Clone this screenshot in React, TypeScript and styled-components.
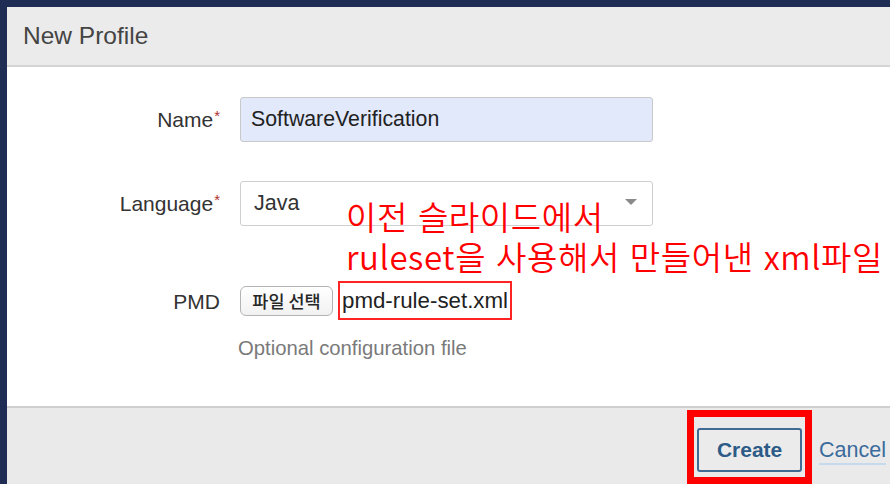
import React from "react";
import styled, { createGlobalStyle } from "styled-components";

const Global = createGlobalStyle`
  *, *::before, *::after { box-sizing: border-box; }
  html, body { margin: 0; padding: 0; }
  body {
    width: 890px;
    height: 484px;
    overflow: hidden;
    background: #1f2d54;
    font-family: "Liberation Sans", Arial, Helvetica, sans-serif;
  }
`;

const Dialog = styled.div`
  margin: 7px 0 0 7px;
  width: 883px;
  height: 477px;
  background: #fff;
  display: flex;
  flex-direction: column;
`;

const Header = styled.header`
  flex: none;
  height: 60px;
  padding-left: 16px;
  display: flex;
  align-items: center;
  background: #ebebeb;
  border-bottom: 2px solid #d5d5d5;
  color: #444;
  font-size: 24.5px;
`;

const Body = styled.section`
  position: relative;
  flex: none;
  height: 339px;
  padding-top: 30px;
`;

const Field = styled.div<{ $gap: number; $h: number }>`
  display: grid;
  grid-template-columns: 215px 413px;
  column-gap: 18px;
  align-items: center;
  margin-top: ${(p) => p.$gap}px;
  height: ${(p) => p.$h}px;
`;

const Label = styled.label<{ $shift?: number }>`
  text-align: right;
  padding-right: 2px;
  color: #333;
  font-size: 21px;
  line-height: 24px;
  margin-top: ${(p) => p.$shift ?? -3}px;
`;

const Required = styled.span`
  color: #b3302c;
  font-size: 15px;
  vertical-align: 6px;
  margin-left: 1px;
`;

const TextInput = styled.input`
  width: 100%;
  height: 45px;
  padding: 0 10px;
  border: 1px solid #c9c9c9;
  border-radius: 3px;
  background: #e1e9fb;
  color: #222;
  font-family: "Liberation Sans", Arial, sans-serif;
  font-size: 21.3px;
  outline: none;
`;

const Select = styled.div`
  height: 45px;
  padding: 0 15px 0 13px;
  display: flex;
  align-items: center;
  justify-content: space-between;
  border: 1px solid #cfcfcf;
  border-radius: 3px;
  background: #fff;
  color: #333;
  font-size: 21.5px;
`;

const Caret = styled.span`
  width: 0;
  height: 0;
  margin-top: -4px;
  border-left: 6px solid transparent;
  border-right: 6px solid transparent;
  border-top: 6px solid #8a8a8a;
`;

const FilePicker = styled.div`
  display: flex;
  align-items: center;
  gap: 5px;
`;

const FileButton = styled.button`
  width: 93px;
  height: 30px;
  padding: 0;
  border: 1px solid #b3b3b3;
  border-radius: 6px;
  background: linear-gradient(#ffffff, #f1f1f1);
  color: #262626;
  font-family: "Noto Sans CJK KR", sans-serif;
  font-weight: 500;
  font-size: 17.5px;
  line-height: 28px;
`;

const FileName = styled.span`
  height: 39px;
  padding: 0 2px 0 2px;
  display: flex;
  align-items: center;
  border: 2px solid #ff2424;
  color: #222;
  font-size: 22.3px;
`;

const Hint = styled.div`
  grid-column: 2;
  margin-left: -2px;
  color: #7a7a7a;
  font-size: 20.3px;
  line-height: 24px;
`;

const Note = styled.div`
  position: absolute;
  left: 339px;
  top: 129px;
  color: #ff0000;
  font-family: "Noto Sans CJK KR", sans-serif;
  font-weight: 350;
  font-size: 33px;
  letter-spacing: 0.6px;
  word-spacing: 2px;
  line-height: 40px;
  white-space: pre;
`;

const Footer = styled.footer`
  flex: 1;
  display: flex;
  justify-content: flex-end;
  align-items: flex-start;
  gap: 7px;
  padding: 2px 4px 0 0;
  background: #eaeaea;
  border-top: 2px solid #cfcfcf;
`;

const Highlight = styled.div`
  border: 7px solid #ff0000;
  padding: 11px 3px 5px 3px;
`;

const PrimaryButton = styled.button`
  display: block;
  width: 105px;
  height: 44px;
  padding: 0;
  border: 2px solid #3f6b95;
  border-radius: 3px;
  background: #ebebeb;
  color: #2d5b87;
  font-family: "Liberation Sans", Arial, sans-serif;
  font-weight: bold;
  font-size: 21px;
`;

const CancelLink = styled.a`
  margin-top: 28px;
  padding-bottom: 1px;
  border-bottom: 2px solid #c6daee;
  color: #3a6b9c;
  font-size: 21.5px;
  line-height: 24px;
  text-decoration: none;
`;

export default function App() {
  return (
    <>
      <Global />
      <Dialog>
        <Header>New Profile</Header>
        <Body>
          <Field $gap={0} $h={45}>
            <Label>
              Name<Required>*</Required>
            </Label>
            <TextInput readOnly value="SoftwareVerification" />
          </Field>
          <Field $gap={39} $h={45}>
            <Label>
              Language<Required>*</Required>
            </Label>
            <Select>
              <span>Java</span>
              <Caret />
            </Select>
          </Field>
          <Field $gap={55} $h={39}>
            <Label $shift={3}>PMD</Label>
            <FilePicker>
              <FileButton type="button">파일 선택</FileButton>
              <FileName>pmd-rule-set.xml</FileName>
            </FilePicker>
          </Field>
          <Field $gap={16} $h={24}>
            <Hint>Optional configuration file</Hint>
          </Field>
          <Note>{"이전 슬라이드에서\nruleset을 사용해서 만들어낸 xml파일"}</Note>
        </Body>
        <Footer>
          <Highlight>
            <PrimaryButton type="button">Create</PrimaryButton>
          </Highlight>
          <CancelLink href="#">Cancel</CancelLink>
        </Footer>
      </Dialog>
    </>
  );
}
